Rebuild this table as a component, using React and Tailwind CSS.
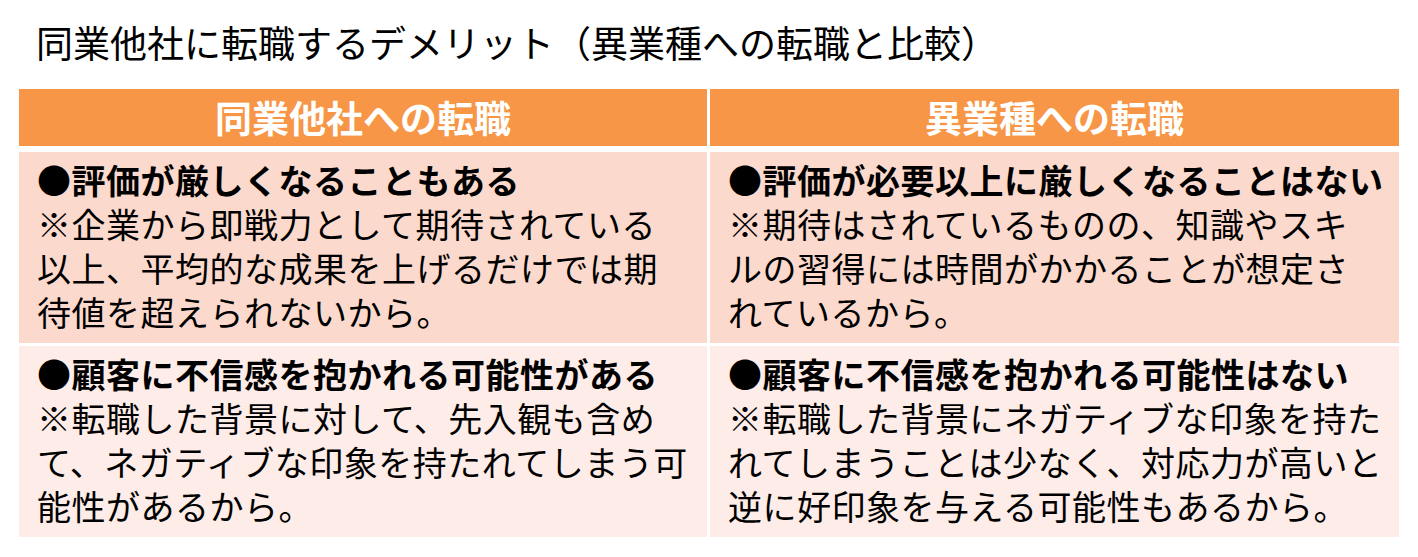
const font = { fontFamily: '"Noto Sans CJK JP", "Noto Sans", sans-serif' };

const rows = [
  {
    bg: 'bg-[#fbd9cc]',
    cells: [
      {
        head: '●評価が厳しくなることもある',
        lines: ['※企業から即戦力として期待されている', '以上、平均的な成果を上げるだけでは期', '待値を超えられないから。'],
      },
      {
        head: '●評価が必要以上に厳しくなることはない',
        lines: ['※期待はされているものの、知識やスキ', 'ルの習得には時間がかかることが想定さ', 'れているから。'],
      },
    ],
  },
  {
    bg: 'bg-[#fdece7]',
    cells: [
      {
        head: '●顧客に不信感を抱かれる可能性がある',
        lines: ['※転職した背景に対して、先入観も含め', 'て、ネガティブな印象を持たれてしまう可', '能性があるから。'],
      },
      {
        head: '●顧客に不信感を抱かれる可能性はない',
        lines: ['※転職した背景にネガティブな印象を持た', 'れてしまうことは少なく、対応力が高いと', '逆に好印象を与える可能性もあるから。'],
      },
    ],
  },
];

export default function App() {
  return (
    <div className="w-[1418px] h-[557px] bg-white text-black overflow-hidden" style={font}>
      <h1 className="pl-[36px] pt-[15px] h-[89px] text-[37px] leading-[54px] font-normal whitespace-nowrap">
        同業他社に転職するデメリット（異業種への転職と比較）
      </h1>

      <div className="ml-[19px] w-[1380px] flex flex-col">
        {/* header */}
        <div className="grid grid-cols-[688px_689px] gap-x-[3px] h-[57px]">
          <div className="bg-[#f79646] flex items-center justify-center text-white font-bold text-[37px] leading-none">
            同業他社への転職
          </div>
          <div className="bg-[#f79646] flex items-center justify-center text-white font-bold text-[37px] leading-none">
            異業種への転職
          </div>
        </div>

        {rows.map((row, i) => (
          <div
            key={i}
            className={`grid grid-cols-[688px_689px] gap-x-[3px] h-[191px] ${i === 0 ? 'mt-[6px]' : 'mt-[3px]'}`}
          >
            {row.cells.map((cell, j) => (
              <div key={j} className={`${row.bg} pl-[18px] pt-[6px] text-[34px] leading-[44px] whitespace-nowrap`}>
                <div className="font-bold tracking-[0.5px]">{cell.head}</div>
                {cell.lines.map((line, k) => (
                  <div key={k} className="tracking-[0.5px]">{line}</div>
                ))}
              </div>
            ))}
          </div>
        ))}
      </div>
    </div>
  );
}
